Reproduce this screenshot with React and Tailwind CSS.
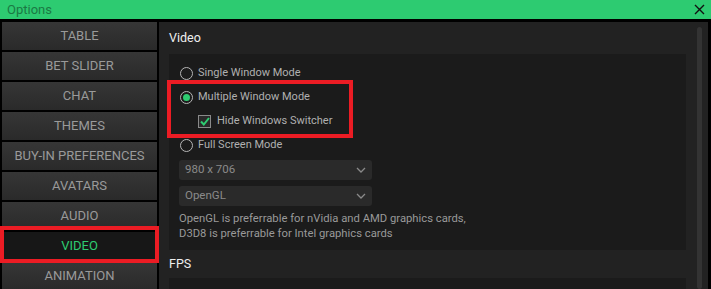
import React from 'react'

const tabs = ['TABLE', 'BET SLIDER', 'CHAT', 'THEMES', 'BUY-IN PREFERENCES', 'AVATARS', 'AUDIO', 'VIDEO', 'ANIMATION']

function Radio({ checked, label }) {
    return (
        <div className="flex items-center h-[24px]">
            <div className="w-[13px] h-[13px] rounded-full border-[1.5px] border-[#b5b5b5] flex items-center justify-center">
                {checked && <div className="w-[7px] h-[7px] rounded-full bg-[#2ecc71]" />}
            </div>
            <span className="ml-[5px] text-[11px] text-[#b0b0b0]">{label}</span>
        </div>
    )
}

function Select({ value }) {
    return (
        <div className="w-[193px] h-[20px] rounded-[3px] bg-[#2a2a2a] flex items-center justify-between px-[6px]">
            <span className="text-[11.5px] text-[#8a8a8a]">{value}</span>
            <svg width="10" height="6" viewBox="0 0 10 6" fill="none" stroke="#8a8a8a" strokeWidth="1.3">
                <path d="M1 1l4 4 4-4" />
            </svg>
        </div>
    )
}

export default function App() {
    return (
        <div className="relative w-[711px] h-[289px] bg-black overflow-hidden flex flex-col" style={{ fontFamily: 'Roboto, "Liberation Sans", sans-serif' }}>
            {/* Title bar */}
            <div className="h-[19px] bg-[#2dcb71] flex items-center justify-between pl-[7px] pr-[6px] shrink-0">
                <span className="text-[13px] text-[#1b7a44]">Options</span>
                <svg width="11" height="11" viewBox="0 0 11 11" stroke="#111" strokeWidth="1.4">
                    <path d="M1 1l9 9M10 1l-9 9" />
                </svg>
            </div>

            <div className="flex flex-1 pt-[3px] min-h-0">
                {/* Sidebar */}
                <div className="w-[159px] pl-[2px] pr-[2px] flex flex-col gap-[2px] shrink-0">
                    {tabs.map((t) => (
                        <div
                            key={t}
                            className={`h-[28px] shrink-0 flex items-center justify-center text-[13px] ${t === 'VIDEO' ? 'bg-[#171717] text-[#2ecc71]' : 'bg-gradient-to-b from-[#363636] to-[#2a2a2a] text-[#9a9a9a]'}`}
                        >
                            {t}
                        </div>
                    ))}
                </div>

                {/* Content */}
                <div className="relative flex-1 bg-[#222] mr-[3px] pl-[10px] pr-[22px]">
                    <div className="h-[32px] flex items-center text-[12.5px] text-[#eee]">Video</div>
                    <div className="bg-[#1b1b1b] h-[196px] pl-[11px] pt-[7px]">
                        <Radio label="Single Window Mode" />
                        <Radio checked label="Multiple Window Mode" />
                        <div className="flex items-center h-[24px] pl-[18px]">
                            <div className="w-[13px] h-[13px] border border-[#8a8a8a] bg-[#2a2a2a] flex items-center justify-center">
                                <svg width="10" height="9" viewBox="0 0 10 9" fill="none" stroke="#2ecc71" strokeWidth="2">
                                    <path d="M1 4.5l2.8 3L9 1" />
                                </svg>
                            </div>
                            <span className="ml-[6px] text-[11px] text-[#b0b0b0]">Hide Windows Switcher</span>
                        </div>
                        <Radio label="Full Screen Mode" />
                        <div className="mt-[3px] flex flex-col gap-[6px] -ml-[1px]">
                            <Select value="980 x 706" />
                            <Select value="OpenGL" />
                        </div>
                        <div className="mt-[5px] -ml-[1px] text-[11.25px] leading-[15px] text-[#999]">
                            <div>OpenGL is preferrable for nVidia and AMD graphics cards,</div>
                            <div>D3D8 is preferrable for Intel graphics cards</div>
                        </div>
                    </div>
                    <div className="h-[28px] flex items-center text-[12.5px] text-[#eee]">FPS</div>
                    <div className="bg-[#1b1b1b] h-[40px]" />

                    {/* Scrollbar */}
                    <div className="absolute right-[6px] top-[5px] bottom-0 w-[5px] rounded-full bg-[#333]" />
                </div>
            </div>

            {/* Highlight boxes */}
            <div className="absolute left-[167px] top-[80px] w-[186px] h-[58px] border-[4px] border-[#ec1c24]" />
            <div className="absolute left-0 top-[226px] w-[159px] h-[37px] border-[4px] border-[#ec1c24]" />
        </div>
    )
}
